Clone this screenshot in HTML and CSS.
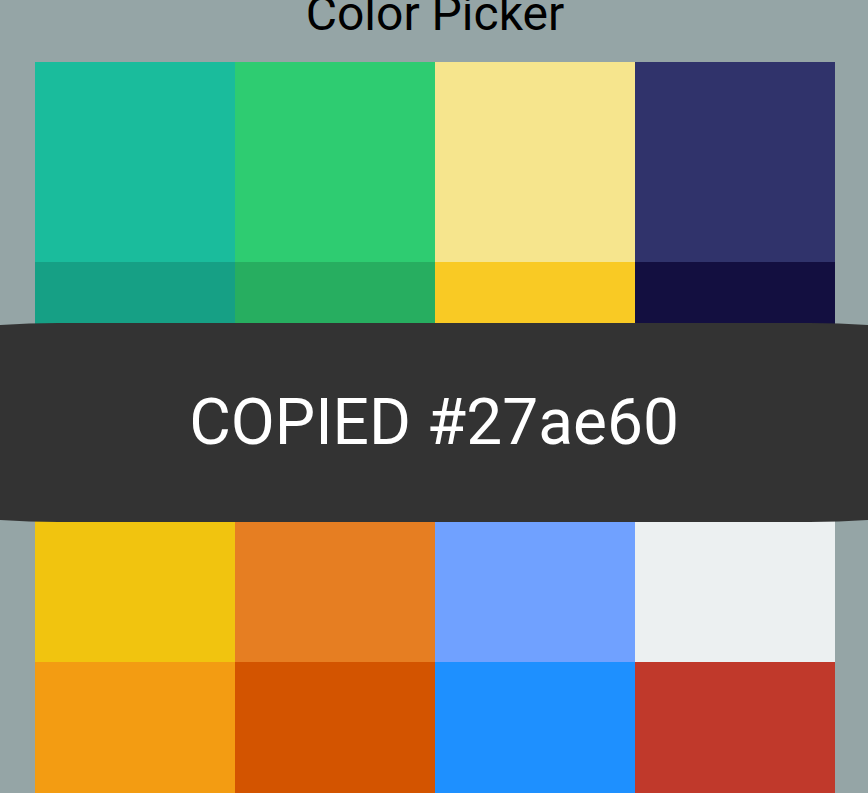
FILE: index.html
```html
<!DOCTYPE html>
<html lang="en">
<head>
<meta charset="utf-8">
<title>Color Picker</title>
<link rel="stylesheet" href="styles.css">
</head>
<body>
  <h1 class="title">Color Picker</h1>
  <div class="grid">
    <div class="swatch c1"></div>
    <div class="swatch c2"></div>
    <div class="swatch c3"></div>
    <div class="swatch c4"></div>
    <div class="swatch c5"></div>
    <div class="swatch c6"></div>
    <div class="swatch c7"></div>
    <div class="swatch c8"></div>
    <div class="swatch c9"></div>
    <div class="swatch c10"></div>
    <div class="swatch c11"></div>
    <div class="swatch c12"></div>
    <div class="swatch c13"></div>
    <div class="swatch c14"></div>
    <div class="swatch c15"></div>
    <div class="swatch c16"></div>
  </div>
  <div class="copied">COPIED #27ae60</div>
</body>
</html>
```

FILE: styles.css
```css
html, body {
  margin: 0;
  padding: 0;
  overflow: hidden;
  height: 793px;
}
body {
  background: #95a5a6;
  font-family: Roboto, "Liberation Sans", sans-serif;
  position: relative;
}
.title {
  width: 800px;
  margin: -10px 0 24px 35px;
  font-size: 48px;
  line-height: 48px;
  font-weight: 400;
  text-align: center;
  color: #000;
}
.grid {
  margin-left: 35px;
  width: 800px;
  display: grid;
  grid-template-columns: repeat(4, 200px);
  grid-auto-rows: 200px;
}
.c1 { background: #1abc9c; }
.c2 { background: #2ecc71; }
.c3 { background: #f6e58d; }
.c4 { background: #30336b; }
.c5 { background: #16a085; }
.c6 { background: #27ae60; }
.c7 { background: #f9ca24; }
.c8 { background: #130f40; }
.c9 { background: #f1c40f; }
.c10 { background: #e67e22; }
.c11 { background: #70a1ff; }
.c12 { background: #ecf0f1; }
.c13 { background: #f39c12; }
.c14 { background: #d35400; }
.c15 { background: #1e90ff; }
.c16 { background: #c0392b; }
.copied {
  position: absolute;
  top: 323px;
  left: -240px;
  width: 1348px;
  height: 199px;
  background: #333333;
  border-radius: 300px / 100px;
  color: #fff;
  font-size: 64px;
  display: flex;
  align-items: center;
  justify-content: center;
}
```
